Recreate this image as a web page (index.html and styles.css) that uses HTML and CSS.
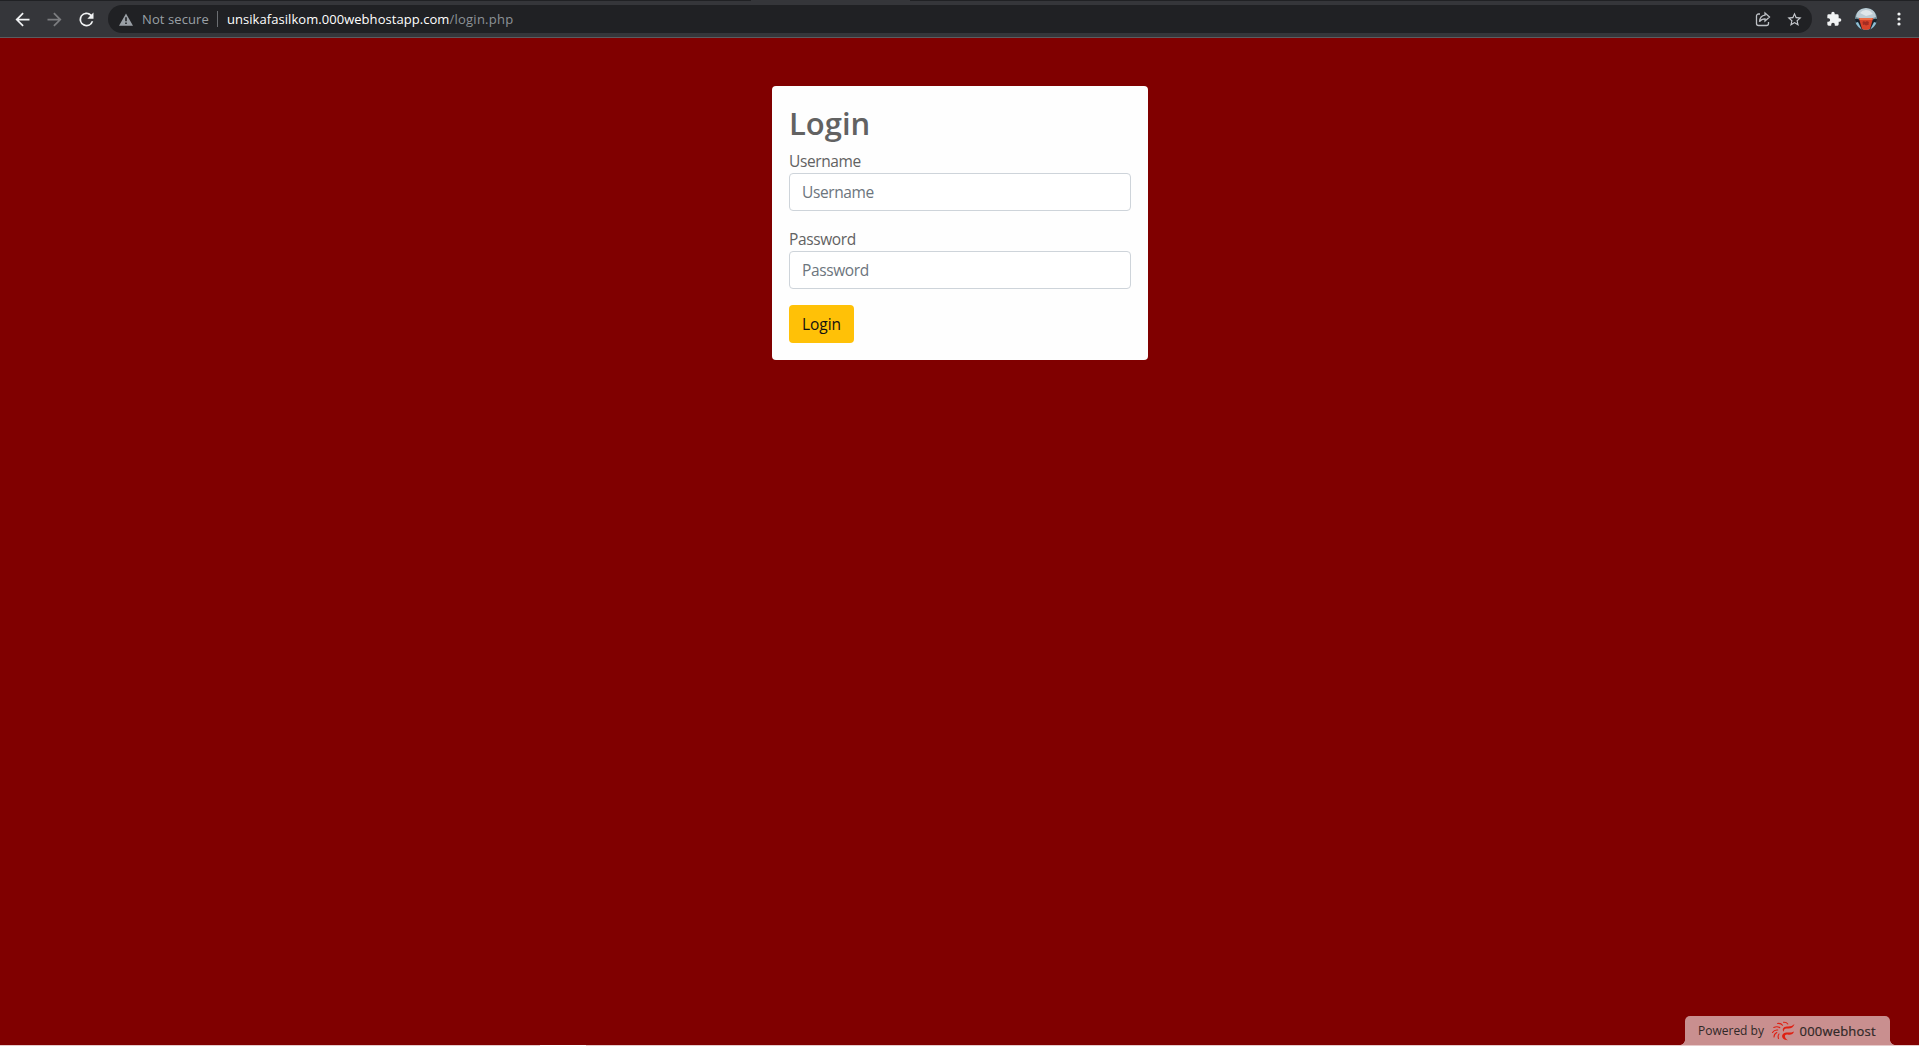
FILE: index.html
```html
<!DOCTYPE html>
<html lang="en">
<head>
<meta charset="utf-8">
<title>Login</title>
<link rel="stylesheet" href="styles.css">
</head>
<body>
<header class="toolbar">
  <nav class="nav">
    <svg class="icon" viewBox="0 0 24 24"><path d="M20 11H7.8l5.6-5.6L12 4l-8 8 8 8 1.4-1.4L7.8 13H20z"/></svg>
    <svg class="icon muted" viewBox="0 0 24 24"><path d="M4 11h12.2l-5.6-5.6L12 4l8 8-8 8-1.4-1.4 5.6-5.6H4z"/></svg>
    <svg class="icon" viewBox="0 0 24 24"><path d="M17.65 6.35A8 8 0 1 0 19.73 14h-2.08A6 6 0 1 1 12 6c1.66 0 3.14.69 4.22 1.78L13 11h7V4z"/></svg>
  </nav>
  <div class="address">
    <svg class="warning" viewBox="0 0 16 14"><path d="M8 0 0 14h16zM7.1 4.500h1.800v4.500H7.100zm0 5.800h1.800v1.800H7.100z" fill-rule="evenodd"/></svg>
    <span class="security">Not secure</span>
    <span class="url"><span class="host">unsikafasilkom.000webhostapp.com</span><span class="path">/login.php</span></span>
    <svg class="share" viewBox="0 0 16 16"><path d="M5 3H3.500A2 2 0 0 0 1.500 5v7.500a2 2 0 0 0 2 2h8a2 2 0 0 0 2-2V11M10 2l4.500 4-4.500 4V7.800C7.500 7.800 5.800 8.700 4.500 10.700 4.800 7.300 6.500 4.600 10 4.200z"/></svg>
    <svg class="star" viewBox="0 0 24 24"><path d="m22 9.240-7.190-.62L12 2 9.190 8.630 2 9.240l5.460 4.730L5.820 21 12 17.270 18.180 21l-1.630-7.030zM12 15.400l-3.760 2.270 1-4.280-3.320-2.880 4.380-.38L12 6.100l1.710 4.040 4.380.38-3.320 2.880 1 4.280z"/></svg>
  </div>
  <div class="actions">
    <svg class="puzzle" viewBox="0 0 24 24"><path d="M20.500 11H19V7a2 2 0 0 0-2-2h-4V3.500a2.500 2.500 0 0 0-5 0V5H4a2 2 0 0 0-2 2v3.800h1.500a2.700 2.700 0 0 1 0 5.400H2V20a2 2 0 0 0 2 2h3.800v-1.500a2.700 2.700 0 0 1 5.400 0V22H17a2 2 0 0 0 2-2v-4h1.500a2.500 2.500 0 0 0 0-5z"/></svg>
    <svg class="avatar" viewBox="0 0 22 22">
      <defs><clipPath id="round"><circle cx="11" cy="11" r="11"/></clipPath></defs>
      <g clip-path="url(#round)">
        <path fill="#75909b" d="M0 0h22v22H0z"/>
        <path fill="#17212a" d="M0 11q4-1 6 3l2 8H0zM22 11q-4-1-6 3l-2 8h8z"/>
        <path fill="#8fc0d5" d="m0 15 3-1 4 8H2zM22 15l-3-1-4 8h5z"/>
        <path fill="#d8432a" d="M3.500 9h15l-3.500 12q-4 2-8 0z"/>
        <path fill="#ec7048" d="M4.500 10h13l-.5 2H5z"/>
        <path fill="#a32c22" d="m7.500 14 1.500-1 1 1 2-1 2 1-.5 1.500.5 1-3 1-1.500-1-1.500.500z"/>
        <path fill="#bccbd3" d="M1 9Q1 1 11 0q10 1 10 9l-3 1H4z"/>
        <path fill="#dfe7ea" d="M5 5q4-5 10-2l3 3-7 2z"/>
      </g>
    </svg>
    <svg class="menu" viewBox="0 0 4 14"><circle cx="2" cy="2" r="1.600"/><circle cx="2" cy="7" r="1.600"/><circle cx="2" cy="12" r="1.600"/></svg>
  </div>
</header>
<main class="page">
  <form class="card">
    <h1 class="title">Login</h1>
    <label class="label" for="username">Username</label>
    <input class="field" id="username" type="text" placeholder="Username">
    <label class="label second" for="password">Password</label>
    <input class="field" id="password" type="password" placeholder="Password">
    <button class="submit" type="button">Login</button>
  </form>
</main>
<aside class="hosting">
  <span class="powered">Powered by</span>
  <svg class="host-logo" viewBox="0 0 24 20"><g fill="#df1f12"><path d="M23.500 3C22.500 6.500 19.500 8 16 7.500c-2.500-.2-3.500 1.200-3 3.200-2.500-2-1-5.300 3-5.300 3.200.2 5.500-.4 7.500-2.400zM23 10.500c-.8 2.800-3.500 3.700-6.500 3-3.500-.5-3.500 3.200.500 5.800-5.500 0-7.500-4.300-4.500-6.800 3-2 6.500.3 10.500-2z"/></g><g fill="none" stroke="#df1f12" stroke-width="1.100" stroke-linecap="round"><path d="M12.500 1.300q3-.2 4.300 1.700M6.500 2.500q3.500-.5 5 1.700M2.800 6.500q3.300-1.500 6 .2M1.500 11.500q2-3 5.300-2.500M3 16q0-3 2.800-4.500M7.500 17.500q-1-2.500.5-4.500"/></g></svg>
  <span class="host-name">000webhost</span>
</aside>
<footer class="bottom-edge"></footer>
</body>
</html>
```
FILE: styles.css
```css
* { box-sizing: border-box; }
body {
  margin: 0;
  height: 1046px;
  overflow: hidden;
  display: flex;
  flex-direction: column;
  background: #800000;
  font-family: "Open Sans", "Noto Sans", sans-serif;
}
svg { display: block; flex: none; }
.toolbar {
  height: 38px;
  flex: none;
  display: flex;
  align-items: center;
  border-bottom: 1px solid #5b5c5f;
  background: linear-gradient(90deg, #202124 751px, #35363a 751px 910px, #202124 910px) 0 0 / 100% 1px no-repeat #35363a;
  padding-top: 1px;
}
.nav { width: 108px; padding-left: 11.5px; display: flex; gap: 11px; }
.icon { width: 21px; height: 21px; fill: #f1f3f4; }
.muted { fill: #7c7d80; }
.address {
  width: 1704px;
  height: 28px;
  padding: 0 9px 0 11px;
  display: flex;
  align-items: center;
  border-radius: 14px;
  background: #202124;
  font-size: 13px;
}
.warning { width: 14px; height: 13px; fill: #9aa0a6; }
.security {
  width: 76px;
  margin-left: 9px;
  color: #9aa0a6;
  border-right: 1px solid #6b6e72;
  line-height: 16px;
  letter-spacing: 0.1px;
  white-space: nowrap;
}
.url { margin-left: 9px; display: flex; flex: 1; color: #fff; }
.host { letter-spacing: 0.05px; }
.path { color: #8d9297; letter-spacing: 0.25px; }
.share { width: 16px; height: 16px; fill: none; stroke: #bdc1c6; stroke-width: 1.3; }
.star { width: 17px; height: 17px; margin-left: 15.5px; fill: #c8cbd0; }
.actions { display: flex; align-items: center; padding-left: 14px; }
.puzzle { width: 16px; height: 16px; fill: #f1f3f4; }
.avatar { width: 22px; height: 22px; margin-left: 13px; }
.menu { width: 4px; height: 14px; margin-left: 19.5px; fill: #f1f3f4; }
.page { flex: 1; display: flex; justify-content: center; align-items: flex-start; padding: 48px 0 0 1px; }
.card {
  width: 376px;
  height: 274px;
  padding: 17px;
  display: flex;
  flex-direction: column;
  align-items: flex-start;
  border-radius: 4px;
  background: #fefefe;
  color: #626262;
}
.title { margin: 0 0 7px; padding-top: 1px; height: 39px; font-size: 31px; line-height: 38px; font-weight: 600; }
.label { height: 24px; font-size: 15.5px; line-height: 25px; letter-spacing: -0.38px; }
.second { margin-top: 16px; }
.field {
  width: 342px;
  height: 38px;
  padding: 6px 12px;
  border: 1px solid #ced4da;
  border-radius: 4px;
  background: #fff;
  font: 15.5px/24px "Open Sans", sans-serif;
  letter-spacing: -0.38px;
}
.field::placeholder { color: #6c757d; opacity: 1; }
.submit {
  width: 65px;
  height: 38px;
  margin-top: 16px;
  padding: 0;
  border: 0;
  border-radius: 4px;
  background: #ffc107;
  color: #111;
  font: 15.5px/24px "Open Sans", sans-serif;
}
.hosting {
  position: relative;
  width: 205px;
  height: 29px;
  margin-right: 29px;
  align-self: flex-end;
  display: flex;
  align-items: center;
  padding-left: 13px;
  border-radius: 5px 5px 0 0;
  background: #c98f8f;
  color: #302827;
  font-size: 12px;
}
.hosting::before,
.hosting::after {
  content: "";
  position: absolute;
  bottom: 0;
  width: 5px;
  height: 5px;
}
.hosting::before { left: -5px; background: radial-gradient(circle at 0 0, transparent 4.500px, #c98f8f 5px); }
.hosting::after { right: -5px; background: radial-gradient(circle at 100% 0, transparent 4.500px, #c98f8f 5px); }
.powered { width: 73px; }
.host-logo { width: 24px; height: 20px; }
.host-name { margin-left: 4.5px; font-size: 13px; letter-spacing: 0.2px; -webkit-text-stroke: 0.2px #302827; }
.bottom-edge {
  height: 1px;
  flex: none;
  background: linear-gradient(90deg, #e7caca 540px, #fff 540px 586px, #e7caca 586px);
}
```
